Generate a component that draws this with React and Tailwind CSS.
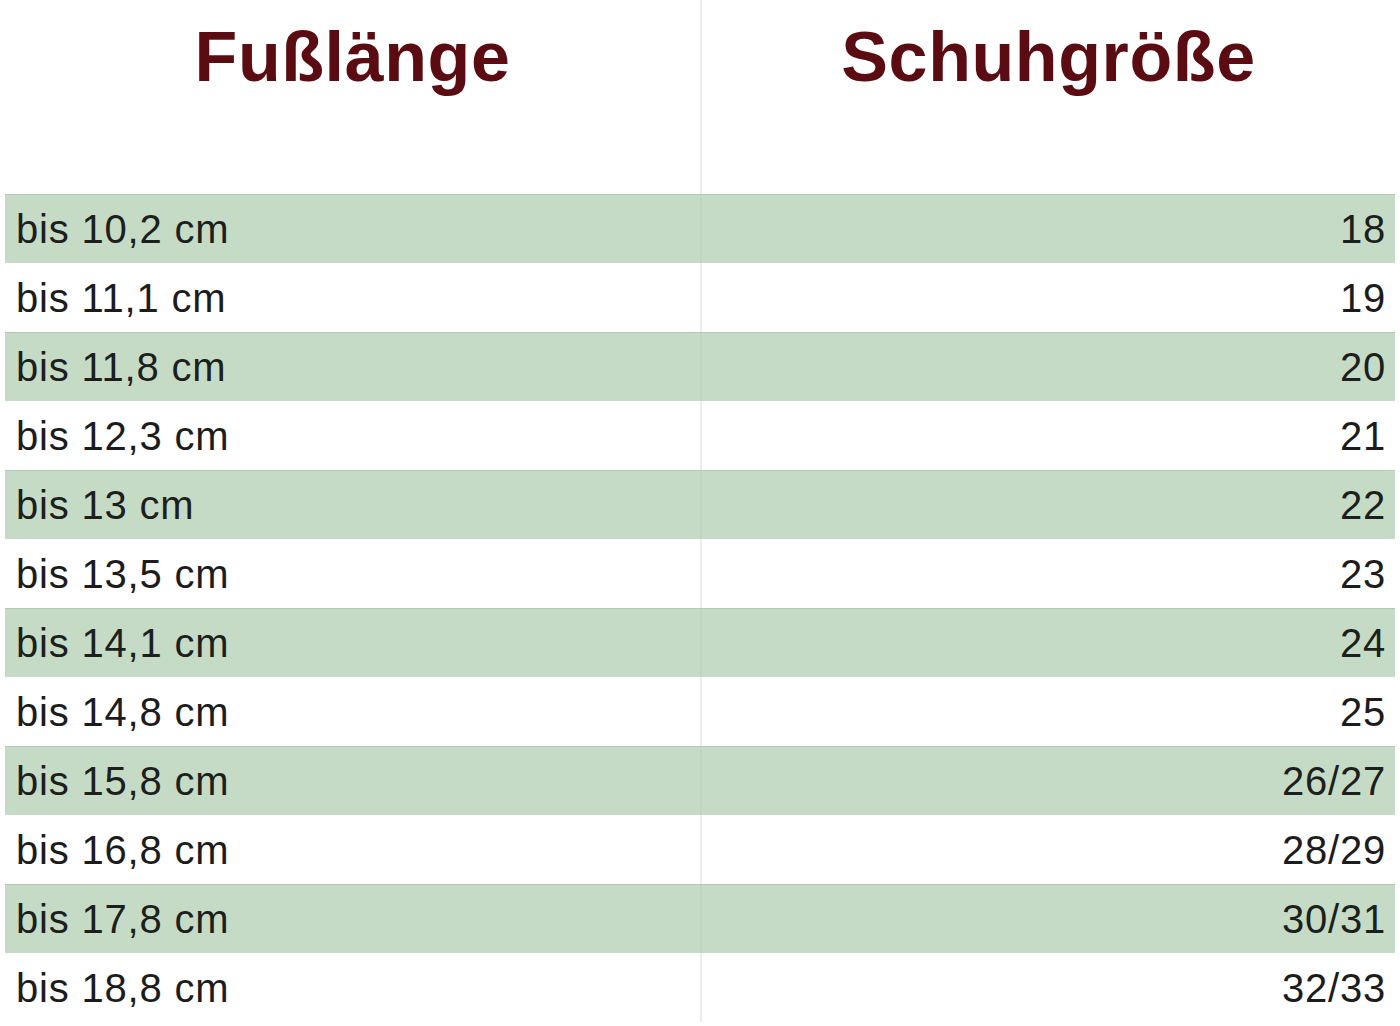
export default function App() {
  const rows = [
    ["bis 10,2 cm", "18"],
    ["bis 11,1 cm", "19"],
    ["bis 11,8 cm", "20"],
    ["bis 12,3 cm", "21"],
    ["bis 13 cm", "22"],
    ["bis 13,5 cm", "23"],
    ["bis 14,1 cm", "24"],
    ["bis 14,8 cm", "25"],
    ["bis 15,8 cm", "26/27"],
    ["bis 16,8 cm", "28/29"],
    ["bis 17,8 cm", "30/31"],
    ["bis 18,8 cm", "32/33"],
  ];
  return (
    <div
      className="w-[1400px] h-[1026px] bg-white overflow-hidden"
      style={{ fontFamily: '"Liberation Sans", Arial, sans-serif' }}
    >
      <div className="grid grid-cols-2 h-[194px] mx-[5px]">
        <div className="pt-[22px] text-center text-[70px] leading-[70px] font-bold tracking-[0.6px] text-[#5a0c12]">
          Fußlänge
        </div>
        <div className="pt-[22px] text-center text-[70px] leading-[70px] font-bold tracking-[0.6px] text-[#5a0c12] border-l-2 border-[#ececec]">
          Schuhgröße
        </div>
      </div>
      <div className="flex flex-col mx-[5px]">
        {rows.map(([a, b], i) => {
          const green = i % 2 === 0;
          return (
            <div
              key={i}
              className={
                green
                  ? "grid grid-cols-2 h-[69px] bg-[#c5dbc6] border-t border-[#b6c9b8] text-[40px] tracking-[0.8px] text-[#1c1f1c]"
                  : "grid grid-cols-2 h-[69px] bg-white text-[40px] tracking-[0.8px] text-[#1c1c1c]"
              }
            >
              <div className="flex items-center pl-[11px]">{a}</div>
              <div
                className={
                  green
                    ? "flex items-center justify-end pr-[9px] border-l-2 border-[#c0d5c1]"
                    : "flex items-center justify-end pr-[9px] border-l-2 border-[#ececec]"
                }
              >
                {b}
              </div>
            </div>
          );
        })}
      </div>
    </div>
  );
}
